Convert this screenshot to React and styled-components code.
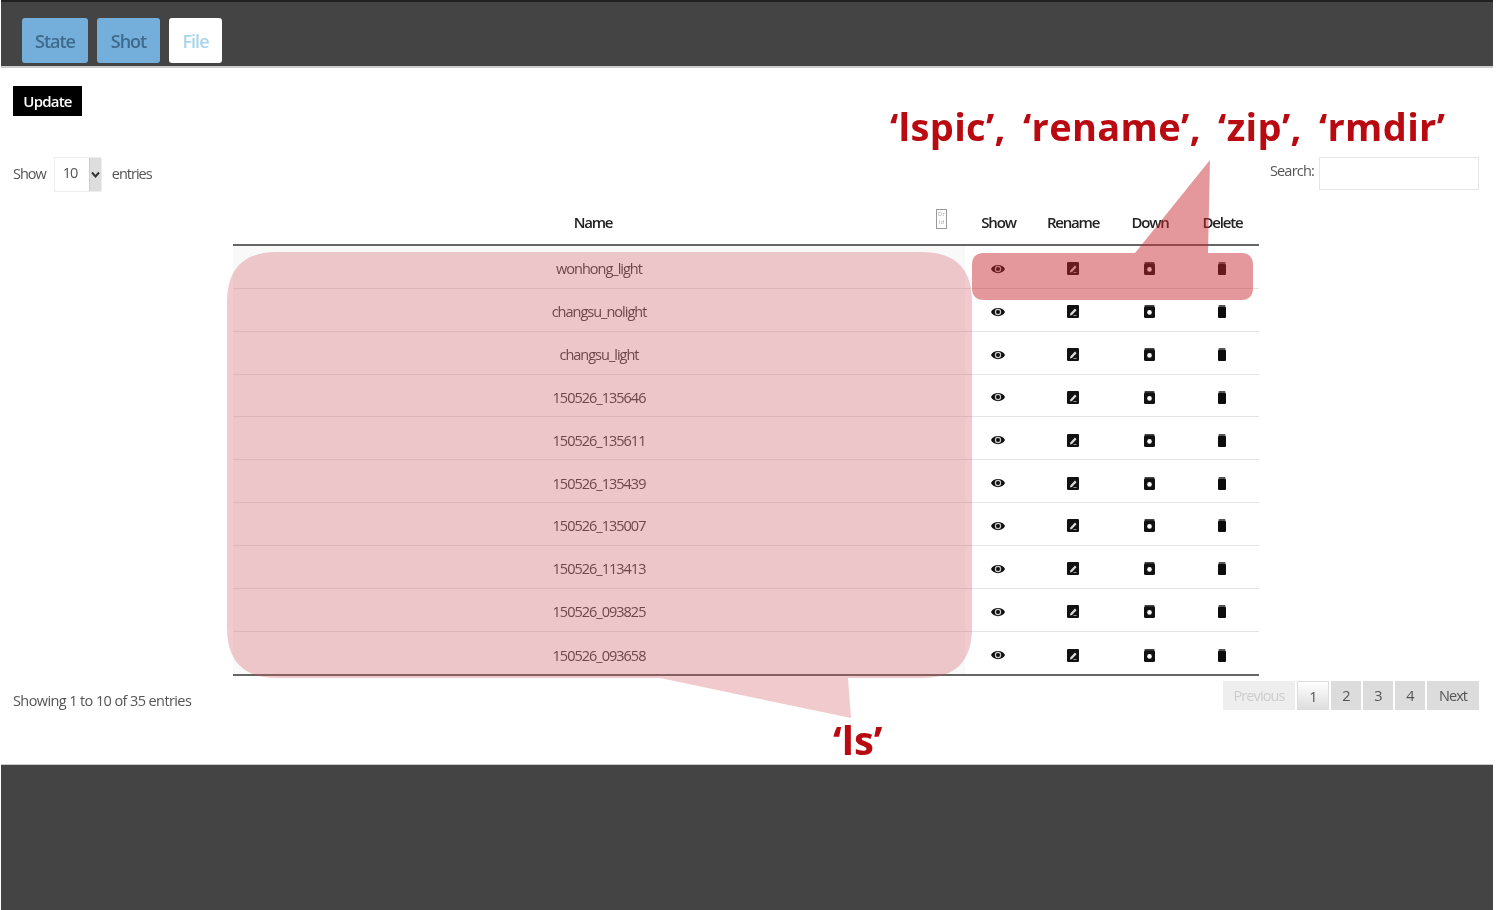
import React from 'react'
import styled, { createGlobalStyle } from 'styled-components'

const GlobalStyle = createGlobalStyle`
  html, body { margin: 0; padding: 0; background: #fff; }
  body { font-family: "Open Sans", "Liberation Sans", sans-serif; color: #333; }
`

const Shell = styled.div`
  position: relative;
  width: 1492px;
  height: 910px;
  margin-left: 1px;
  overflow: hidden;
  filter: blur(0.45px);
`

const TopBar = styled.header`
  display: flex;
  gap: 9px;
  box-sizing: border-box;
  height: 68px;
  padding: 16px 0 0 21px;
  background: #444;
  border-top: 2px solid #222;
  border-bottom: 2px solid #ccc;
`

const Tab = styled.div`
  box-sizing: border-box;
  width: ${p => p.$w}px;
  height: 45px;
  border-radius: 3px;
  background: ${p => (p.$active ? '#fff' : '#74afdb')};
  color: ${p => (p.$active ? '#a9d4ea' : '#3f6a8c')};
  font-size: 18px;
  font-weight: 600;
  line-height: 47px;
  letter-spacing: -1px;
  text-align: center;
`

const Panel = styled.main`
  box-sizing: border-box;
  height: 696px;
  padding: 18px 14px 0 12px;
  background: #fff;
`

const UpdateButton = styled.div`
  width: 69px;
  height: 30px;
  background: #000;
  color: #fff;
  font-size: 15px;
  font-weight: 600;
  line-height: 30px;
  letter-spacing: -0.8px;
  text-align: center;
`

const Controls = styled.div`
  display: flex;
  justify-content: space-between;
  height: 35px;
  margin-top: 41px;
  font-size: 14.5px;
  letter-spacing: -1px;
  color: #555;
`

const Length = styled.div`
  display: flex;
  align-items: center;
  gap: 9px;
`

const LengthLabel = styled.span`
  margin-bottom: 3px;
`

const Select = styled.div`
  display: flex;
  box-sizing: border-box;
  width: 48px;
  height: 35px;
  margin: 0 1px 0 -1px;
  border: 1px solid #eee;
`

const SelectValue = styled.span`
  flex: 1;
  padding-left: 8px;
  line-height: 30px;
`

const SelectArrow = styled.span`
  display: flex;
  align-items: center;
  justify-content: center;
  width: 11px;
  background: #ddd;
  border-left: 1px solid #ccc;
`

const Search = styled.div`
  display: flex;
  gap: 5px;
  height: 33px;
  line-height: 27px;
  letter-spacing: -0.8px;
`

const SearchBox = styled.div`
  box-sizing: border-box;
  width: 160px;
  height: 33px;
  border: 1px solid #e4e4e4;
`

const Table = styled.div`
  width: 1026px;
  margin: 8px auto 0;
  border-bottom: 2px solid #666;
`

const columns = '732px 67px 82px 72px 73px'

const HeadRow = styled.div`
  position: relative;
  display: grid;
  grid-template-columns: ${columns};
  box-sizing: border-box;
  height: 46px;
  border-bottom: 2px solid #666;
  font-size: 15px;
  font-weight: 600;
  letter-spacing: -1.2px;
  color: #222;
`

const HeadCell = styled.div`
  padding: ${p => (p.$name ? '0 12px 0 0' : '0')};
  line-height: 45px;
  text-align: center;
`

const SortMark = styled.span`
  position: absolute;
  left: 703px;
  top: 9px;
  box-sizing: border-box;
  width: 11px;
  height: 20px;
  border: 1px solid #999;
  font-size: 6px;
  font-weight: 400;
  line-height: 8px;
  letter-spacing: 0;
  color: #aaa;
  text-align: center;
`

const Row = styled.div`
  display: grid;
  grid-template-columns: ${columns};
  height: 42.85px;
  box-sizing: border-box;
  border-bottom: ${p => (p.$last ? 'none' : '1px solid #e3e3e3')};
`

const NameCell = styled.div`
  display: flex;
  align-items: center;
  justify-content: center;
  padding-top: 4px;
  background: #f9f9f9;
  font-size: 14.5px;
  letter-spacing: -1px;
  color: #444;
`

const IconCell = styled.div`
  display: flex;
  align-items: center;
  justify-content: center;
  padding: 4px 1px 0 0;
`

const TableFooter = styled.div`
  display: flex;
  justify-content: space-between;
  margin-top: 5px;
  font-size: 14.5px;
  letter-spacing: -0.6px;
  color: #555;
`

const Info = styled.div`
  padding-top: 10px;
`

const Pager = styled.div`
  display: flex;
  gap: 2px;
  letter-spacing: -0.9px;
`

const PageLink = styled.div`
  box-sizing: border-box;
  width: ${p => p.$w}px;
  height: 29px;
  background: ${p => (p.$current ? 'linear-gradient(#fff, #ddd)' : p.$disabled ? '#eee' : '#dcdcdc')};
  border: ${p => (p.$current ? '1px solid #ddd' : 'none')};
  color: ${p => (p.$disabled ? '#ccc' : '#555')};
  line-height: 29px;
  text-align: center;
`

const BottomBar = styled.footer`
  height: 146px;
  background: #444;
  border-top: 1px solid #ccc;
`

const Callouts = styled.svg`
  position: absolute;
  left: -1px;
  top: 0;
  pointer-events: none;
`

const Note = styled.div`
  position: absolute;
  left: ${p => p.$x}px;
  top: ${p => p.$y}px;
  font-size: ${p => p.$size}px;
  font-weight: 700;
  letter-spacing: ${p => p.$track}px;
  word-spacing: ${p => p.$words || 0}px;
  color: #b80a10;
  white-space: nowrap;
`

const names = [
  'wonhong_light', 'changsu_nolight', 'changsu_light', '150526_135646', '150526_135611',
  '150526_135439', '150526_135007', '150526_113413', '150526_093825', '150526_093658',
]

const Eye = () => (
  <svg width="14" height="12" viewBox="0 0 14 12">
    <path d="M0 6C2 0.5 12 0.5 14 6C12 11.5 2 11.5 0 6Z" fill="#111" />
    <circle cx="7" cy="6" r="3.2" fill="#ccc" />
    <circle cx="7" cy="6" r="2" fill="#111" />
  </svg>
)

const Edit = () => (
  <svg width="12" height="13" viewBox="0 0 12 13">
    <rect width="12" height="13" rx="1.2" fill="#111" />
    <path d="M3 10.5L3.5 8.2L8 3.5L9.5 5.2L5 10Z" fill="#ddd" />
    <path d="M6.5 10.5H9.5" stroke="#bbb" strokeWidth="0.8" />
  </svg>
)

const Down = () => (
  <svg width="11" height="13" viewBox="0 0 11 13">
    <rect x="0.5" width="10" height="3" rx="0.8" fill="#444" />
    <rect y="1.5" width="11" height="11.5" rx="1.5" fill="#111" />
    <circle cx="5.5" cy="7.4" r="2.3" fill="#fff" />
  </svg>
)

const Trash = () => (
  <svg width="8" height="13" viewBox="0 0 8 13">
    <rect x="0.5" width="7" height="3" rx="1" fill="#555" />
    <rect y="2" width="8" height="11" rx="1" fill="#0c0c0c" />
  </svg>
)

const pages = [
  { label: 'Previous', w: 72, disabled: true },
  { label: '1', w: 32, current: true },
  { label: '2', w: 30 },
  { label: '3', w: 30 },
  { label: '4', w: 30 },
  { label: 'Next', w: 52 },
]

export default function App() {
  return (
    <Shell>
      <GlobalStyle />
      <TopBar>
        <Tab $w={66}>State</Tab>
        <Tab $w={63}>Shot</Tab>
        <Tab $w={53} $active>File</Tab>
      </TopBar>
      <Panel>
        <UpdateButton>Update</UpdateButton>
        <Controls>
          <Length>
            <LengthLabel>Show</LengthLabel>
            <Select>
              <SelectValue>10</SelectValue>
              <SelectArrow>
                <svg width="9" height="7" viewBox="0 0 9 7">
                  <path d="M1 1.5L4.5 5.5L8 1.5" fill="none" stroke="#333" strokeWidth="2" />
                </svg>
              </SelectArrow>
            </Select>
            <LengthLabel>entries</LengthLabel>
          </Length>
          <Search>
            Search:
            <SearchBox />
          </Search>
        </Controls>
        <Table>
          <HeadRow>
            <HeadCell $name>Name</HeadCell>
            <HeadCell>Show</HeadCell>
            <HeadCell>Rename</HeadCell>
            <HeadCell>Down</HeadCell>
            <HeadCell>Delete</HeadCell>
            <SortMark>Dr<br />Id</SortMark>
          </HeadRow>
          {names.map((name, i) => (
            <Row key={name} $last={i === names.length - 1}>
              <NameCell>{name}</NameCell>
              <IconCell><Eye /></IconCell>
              <IconCell><Edit /></IconCell>
              <IconCell><Down /></IconCell>
              <IconCell><Trash /></IconCell>
            </Row>
          ))}
        </Table>
        <TableFooter>
          <Info>Showing 1 to 10 of 35 entries</Info>
          <Pager>
            {pages.map(p => (
              <PageLink key={p.label} $w={p.w} $current={p.current} $disabled={p.disabled}>{p.label}</PageLink>
            ))}
          </Pager>
        </TableFooter>
      </Panel>
      <BottomBar />
      <Callouts width="1493" height="910" viewBox="0 0 1493 910">
        <path
          d="M277 252H922Q972 252 972 302V628Q972 678 922 678H848L851 718L660 678H277Q227 678 227 628V302Q227 252 277 252Z"
          fill="#cc5058"
          fillOpacity="0.3"
        />
        <path
          d="M984 253H1135L1210 160L1208 253H1241Q1253 253 1253 265V288Q1253 300 1241 300H984Q972 300 972 288V265Q972 253 984 253Z"
          fill="#c8282d"
          fillOpacity="0.48"
        />
      </Callouts>
      <Note $x={889} $y={100} $size={38} $track={0.35} $words={7}>‘lspic’, ‘rename’, ‘zip’, ‘rmdir’</Note>
      <Note $x={832} $y={712} $size={40} $track={0}>‘ls’</Note>
    </Shell>
  )
}
